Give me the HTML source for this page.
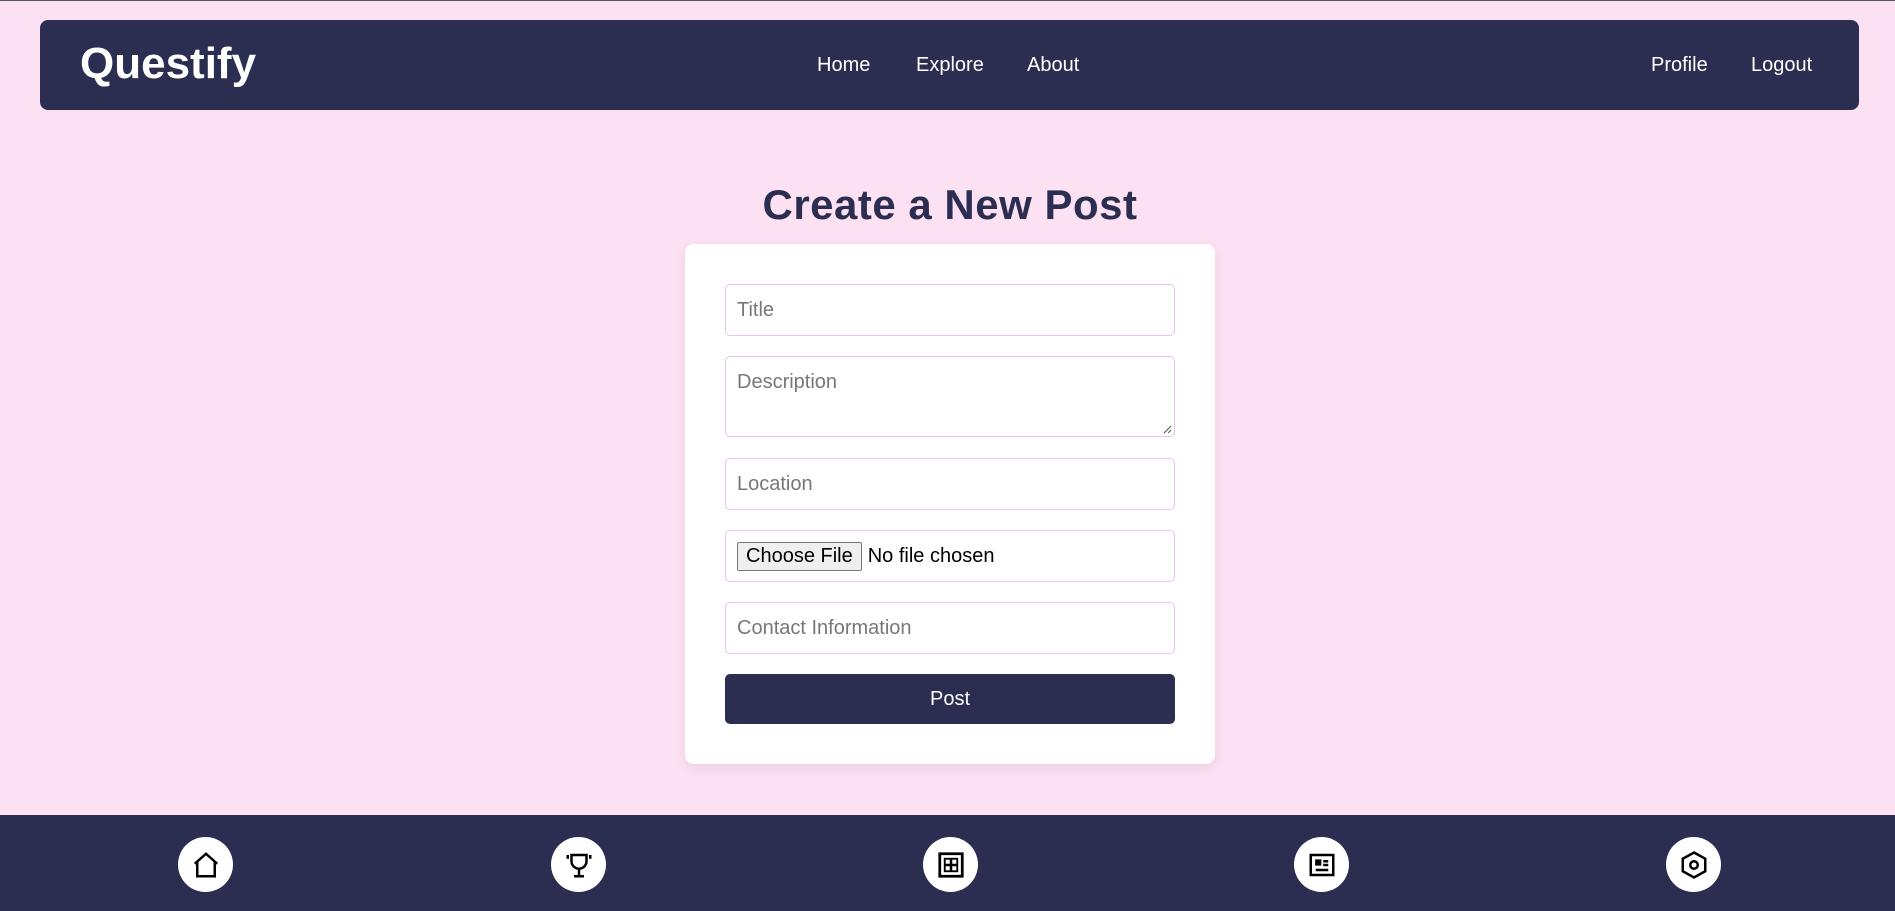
<!DOCTYPE html>
<html><head><meta charset="utf-8"><style>
*{box-sizing:border-box;margin:0;padding:0}
body{width:1895px;height:910px;background:#fce1f3;font-family:"Liberation Sans",sans-serif;position:relative;overflow:hidden;border-top:1px solid #555}
.nav{position:absolute;left:40px;top:19px;width:1819px;height:90px;background:#2b2e50;border-radius:8px;color:#fff}
.logo{position:absolute;left:80px;top:38px;font-size:44px;font-weight:bold;letter-spacing:0px}
h1{position:absolute;left:0;width:1900px;text-align:center;top:180px;font-size:42px;color:#2b2e50;font-weight:bold;letter-spacing:0.5px}
.card{position:absolute;left:685px;top:243px;width:530px;height:520px;background:#fff;border-radius:9px;box-shadow:0 4px 12px rgba(0,0,0,.08)}
.f{position:absolute;left:725px;width:450px;border:1px solid #e8c2ee;border-radius:5px;background:#fff;font-size:20px;color:#777;padding-left:11px}
.btn{position:absolute;left:725px;top:673px;width:450px;height:50px;background:#2b2e50;border-radius:5px;color:#fff;font-size:20px;text-align:center;line-height:50px}
.foot{position:absolute;left:0;top:814px;width:1895px;height:96px;background:#2b2e50}
.c{position:absolute;top:836px;width:55px;height:55px;border-radius:50%;background:#fff;display:flex;align-items:center;justify-content:center}
.l{position:absolute;top:53px;font-size:20px;color:#fff;text-decoration:none}
</style></head><body>
<div class="nav"></div>
<div class="logo" style="color:#fff">Questify</div>
<a class="l" style="left:817px">Home</a>
<a class="l" style="left:916px">Explore</a>
<a class="l" style="left:1027px">About</a>
<a class="l" style="left:1651px">Profile</a>
<a class="l" style="left:1751px">Logout</a>
<h1>Create a New Post</h1>
<div class="card"></div>
<div class="f" style="top:283px;height:52px;line-height:50px">Title</div>
<div class="f" style="top:355px;height:81px;padding-top:14px">Description
<svg style="position:absolute;right:2px;bottom:2px" width="10" height="10"><path d="M9 2L2 9M9 6L6 9" stroke="#555" stroke-width="1"/></svg></div>
<div class="f" style="top:457px;height:52px;line-height:50px">Location</div>
<div class="f" style="top:529px;height:52px;color:#000;display:flex;align-items:center">
<span style="border:1px solid #777;background:#efefef;border-radius:2px;padding:2px 8px;font-size:20px;margin-right:6px">Choose File</span>No file chosen</div>
<div class="f" style="top:601px;height:52px;line-height:50px">Contact Information</div>
<div class="btn">Post</div>
<div class="foot"></div>
<div class="c" style="left:178px"><svg width="30" height="30" viewBox="0 0 24 24" fill="none" stroke="#000" stroke-width="2"><path d="M3 11L12 3l9 8M5 9v12h14V9"/></svg></div>
<div class="c" style="left:551px"><svg width="30" height="30" viewBox="0 0 24 24" fill="none" stroke="#000" stroke-width="2"><path d="M6 4h12v5a6 6 0 0 1-12 0zM12 15v5M8 21h8M3 4v3M21 4v3"/></svg></div>
<div class="c" style="left:923px"><svg width="30" height="30" viewBox="0 0 24 24" fill="none" stroke="#000" stroke-width="2.2"><rect x="3" y="3" width="18" height="18"/><path d="M12 7v10M7 12h10" stroke-width="2"/><rect x="7" y="7" width="10" height="10" stroke-width="1.5"/></svg></div>
<div class="c" style="left:1294px"><svg width="30" height="30" viewBox="0 0 24 24" fill="none" stroke="#000" stroke-width="2"><rect x="3" y="4" width="18" height="16"/><rect x="7" y="8" width="4" height="4" fill="#000" stroke-width="1"/><path d="M13 9h4M13 12h4M7 16h10"/></svg></div>
<div class="c" style="left:1666px"><svg width="30" height="30" viewBox="0 0 24 24" fill="none" stroke="#000" stroke-width="2"><path d="M12 2l9 5v10l-9 5-9-5V7z"/><circle cx="12" cy="12" r="3"/></svg></div>
</body></html>
